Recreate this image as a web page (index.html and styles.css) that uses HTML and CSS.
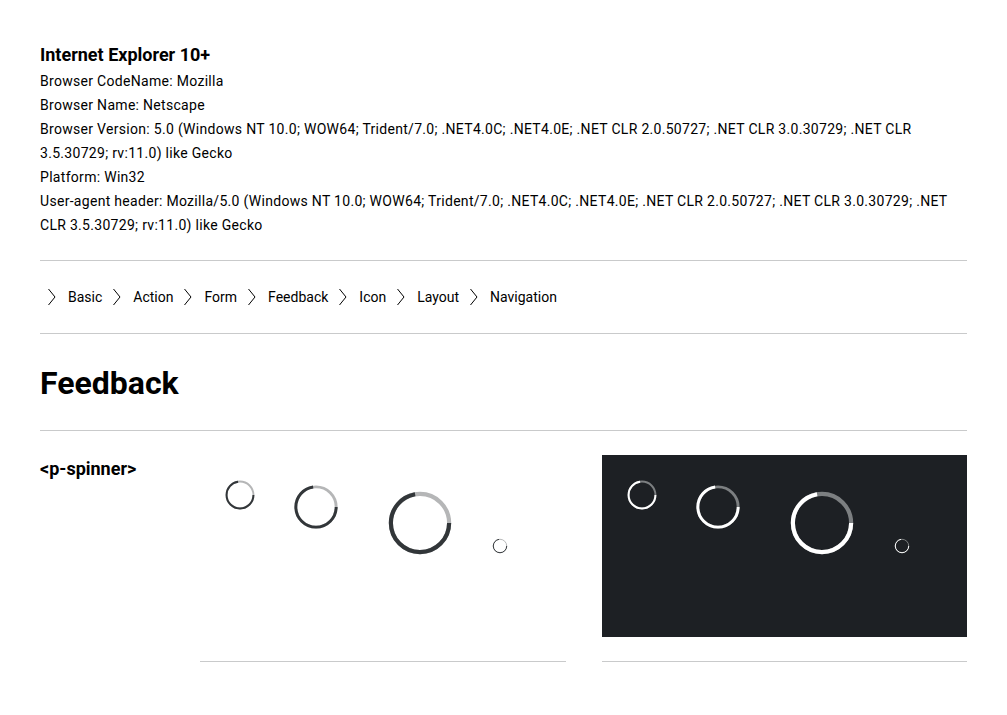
FILE: index.html
```html
<!DOCTYPE html>
<html lang="en">
<head>
<meta charset="utf-8">
<title>Feedback</title>
<link rel="stylesheet" href="styles.css">
</head>
<body>
<div class="page">
  <section class="browser-info">
    <h3 class="info-title">Internet Explorer 10+</h3>
    <p class="info-line">Browser CodeName: Mozilla</p>
    <p class="info-line">Browser Name: Netscape</p>
    <p class="info-line">Browser Version: 5.0 (Windows NT 10.0; WOW64; Trident/7.0; .NET4.0C; .NET4.0E; .NET CLR 2.0.50727; .NET CLR 3.0.30729; .NET CLR 3.5.30729; rv:11.0) like Gecko</p>
    <p class="info-line">Platform: Win32</p>
    <p class="info-line">User-agent header: Mozilla/5.0 (Windows NT 10.0; WOW64; Trident/7.0; .NET4.0C; .NET4.0E; .NET CLR 2.0.50727; .NET CLR 3.0.30729; .NET CLR 3.5.30729; rv:11.0) like Gecko</p>
  </section>

  <nav class="nav">
    <a class="nav-link" href="#"><svg class="chev" viewBox="0 0 24 24"><path d="M8.5 4 L15 12 L8.5 20"/></svg><span>Basic</span></a>
    <a class="nav-link" href="#"><svg class="chev" viewBox="0 0 24 24"><path d="M8.5 4 L15 12 L8.5 20"/></svg><span>Action</span></a>
    <a class="nav-link" href="#"><svg class="chev" viewBox="0 0 24 24"><path d="M8.5 4 L15 12 L8.5 20"/></svg><span>Form</span></a>
    <a class="nav-link" href="#"><svg class="chev" viewBox="0 0 24 24"><path d="M8.5 4 L15 12 L8.5 20"/></svg><span>Feedback</span></a>
    <a class="nav-link" href="#"><svg class="chev" viewBox="0 0 24 24"><path d="M8.5 4 L15 12 L8.5 20"/></svg><span>Icon</span></a>
    <a class="nav-link" href="#"><svg class="chev" viewBox="0 0 24 24"><path d="M8.5 4 L15 12 L8.5 20"/></svg><span>Layout</span></a>
    <a class="nav-link" href="#"><svg class="chev" viewBox="0 0 24 24"><path d="M8.5 4 L15 12 L8.5 20"/></svg><span>Navigation</span></a>
  </nav>

  <h1 class="page-title">Feedback</h1>

  <section class="demo">
    <h4 class="demo-label">&lt;p-spinner&gt;</h4>
    <div class="demo-col">
      <div class="panel panel-light">
        <svg class="spinner s-small" viewBox="0 0 100 100"><circle class="bg" cx="50" cy="50" r="28"/><circle class="fg" cx="50" cy="50" r="28"/></svg>
        <svg class="spinner s-medium" viewBox="0 0 100 100"><circle class="bg" cx="50" cy="50" r="28"/><circle class="fg" cx="50" cy="50" r="28"/></svg>
        <svg class="spinner s-large" viewBox="0 0 100 100"><circle class="bg" cx="50" cy="50" r="28"/><circle class="fg" cx="50" cy="50" r="28"/></svg>
        <svg class="spinner s-xsmall" viewBox="0 0 100 100"><circle class="bg" cx="50" cy="50" r="28"/><circle class="fg" cx="50" cy="50" r="28"/></svg>
      </div>
    </div>
    <div class="demo-col">
      <div class="panel panel-dark">
        <svg class="spinner s-small" viewBox="0 0 100 100"><circle class="bg" cx="50" cy="50" r="28"/><circle class="fg" cx="50" cy="50" r="28"/></svg>
        <svg class="spinner s-medium" viewBox="0 0 100 100"><circle class="bg" cx="50" cy="50" r="28"/><circle class="fg" cx="50" cy="50" r="28"/></svg>
        <svg class="spinner s-large" viewBox="0 0 100 100"><circle class="bg" cx="50" cy="50" r="28"/><circle class="fg" cx="50" cy="50" r="28"/></svg>
        <svg class="spinner s-xsmall" viewBox="0 0 100 100"><circle class="bg" cx="50" cy="50" r="28"/><circle class="fg" cx="50" cy="50" r="28"/></svg>
      </div>
    </div>
  </section>
</div>
</body>
</html>
```

FILE: styles.css
```css
* { box-sizing: border-box; }

html, body {
  margin: 0;
  padding: 0;
  background: #fff;
}

body {
  font-family: Roboto, "Liberation Sans", Arial, sans-serif;
  color: #000;
  font-size: 14px;
  line-height: 24px;
}

.page {
  padding: 0 40px;
}

.browser-info {
  padding-top: 43px;
  padding-bottom: 23px;
  border-bottom: 1px solid #c9cacb;
}

.info-title {
  margin: 0 0 2px;
  font-size: 18px;
  line-height: 24px;
  font-weight: 700;
}

.info-line {
  margin: 0;
  letter-spacing: 0.3px;
}

.nav {
  display: flex;
  gap: 3px;
  padding: 24px 0;
  border-bottom: 1px solid #c9cacb;
}

.nav-link {
  display: flex;
  align-items: center;
  gap: 4px;
  color: #000;
  text-decoration: none;
  height: 24px;
  font-size: 14px;
}

.chev {
  width: 24px;
  height: 24px;
  flex: none;
}

.chev path {
  fill: none;
  stroke: #000;
  stroke-width: 1;
}

.page-title {
  margin: 29px 0 27px;
  font-size: 32px;
  line-height: 40px;
  font-weight: 700;
}

.demo {
  display: grid;
  grid-template-columns: 124px 1fr 1fr;
  column-gap: 36px;
  border-top: 1px solid #c9cacb;
  padding-top: 24px;
}

.demo-label {
  margin: 2px 0 0;
  font-size: 18px;
  line-height: 24px;
  font-weight: 700;
  white-space: nowrap;
}

.demo-col {
  padding-bottom: 24px;
  border-bottom: 1px solid #c9cacb;
}

.panel {
  display: flex;
  align-items: flex-start;
  gap: 16px;
  padding: 16px;
  height: 182px;
}

.panel-light { background: #fff; }
.panel-dark { background: #1d2024; }

.spinner { flex: none; display: block; }
.s-small { width: 48px; height: 48px; }
.s-medium { width: 72px; height: 72px; }
.s-large { width: 104px; height: 104px; }
.s-xsmall { width: 24px; height: 24px; margin-top: 63px; }

.spinner circle {
  fill: none;
  stroke-width: 4;
}

.spinner .fg {
  stroke-dasharray: 127 200;
}

.panel-light .bg { stroke: #b5b6b7; }
.panel-light .fg { stroke: #323639; }
.panel-dark .bg { stroke: #7c7f81; }
.panel-dark .fg { stroke: #ffffff; }
```
